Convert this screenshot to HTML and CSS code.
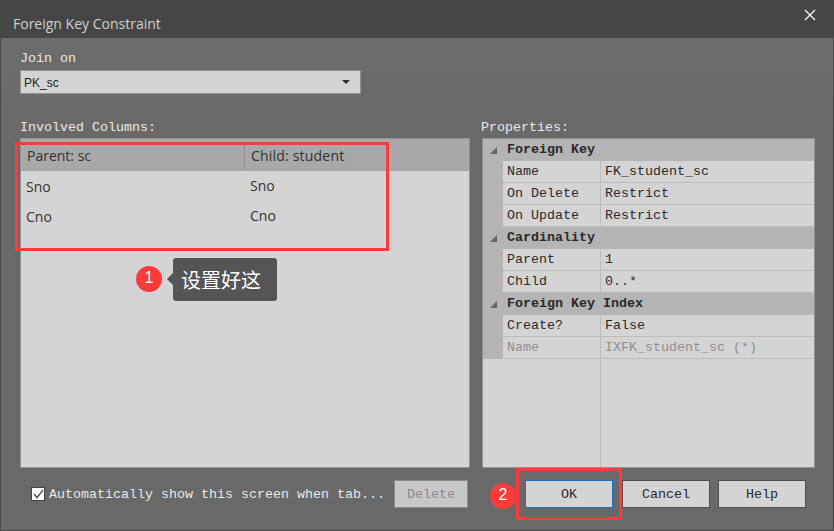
FILE: index.html
```html
<!DOCTYPE html>
<html>
<head>
<meta charset="utf-8">
<title>Foreign Key Constraint</title>
<link rel="stylesheet" href="styles.css">
</head>
<body>
<div class="dialog">
	<div class="titlebar">
		<span class="title">Foreign Key Constraint</span>
		<svg class="close" width="12" height="12" viewBox="0 0 12 12"><path d="M1 1L11 11M11 1L1 11" stroke="#fff" stroke-width="1.2" fill="none"/></svg>
	</div>
	<div class="content">
		<div class="label join-label">Join on</div>
		<div class="select">
			<span class="select-text">PK_sc</span>
			<span class="select-arrow"></span>
		</div>
		<div class="panels">
			<div class="panel-col">
				<div class="label">Involved Columns:</div>
				<div class="columns">
					<div class="col-head">
						<div class="head-cell first">Parent: sc</div>
						<div class="head-cell">Child: student</div>
					</div>
					<div class="col-row">
						<div class="cell first">Sno</div>
						<div class="cell second">Sno</div>
					</div>
					<div class="col-row">
						<div class="cell first">Cno</div>
						<div class="cell second">Cno</div>
					</div>
				</div>
			</div>
			<div class="panel-col">
				<div class="label props-label">Properties:</div>
				<div class="props">
					<div class="group"><span class="tri"></span>Foreign Key</div>
					<div class="prop"><div class="key">Name</div><div class="val">FK_student_sc</div></div>
					<div class="prop"><div class="key">On Delete</div><div class="val">Restrict</div></div>
					<div class="prop"><div class="key">On Update</div><div class="val">Restrict</div></div>
					<div class="group"><span class="tri"></span>Cardinality</div>
					<div class="prop"><div class="key">Parent</div><div class="val">1</div></div>
					<div class="prop"><div class="key">Child</div><div class="val">0..*</div></div>
					<div class="group"><span class="tri"></span>Foreign Key Index</div>
					<div class="prop"><div class="key">Create?</div><div class="val">False</div></div>
					<div class="prop disabled"><div class="key">Name</div><div class="val">IXFK_student_sc (*)</div></div>
					<div class="props-rest"><div class="rest-key"></div></div>
				</div>
			</div>
		</div>
		<div class="footer">
			<div class="check">
				<svg width="11" height="10" viewBox="0 0 11 10"><path d="M1 5L4 8.5L10 1" stroke="#555" stroke-width="1.5" fill="none"/></svg>
			</div>
			<div class="check-text">Automatically show this screen when tab...</div>
			<div class="btn off">Delete</div>
			<div class="btn ok">OK</div>
			<div class="btn">Cancel</div>
			<div class="btn">Help</div>
		</div>
	</div>

	<!-- annotations drawn over the screenshot -->
	<div class="mark mark-columns"></div>
	<div class="mark mark-ok"></div>
	<div class="badge badge-one">1</div>
	<div class="badge badge-two">2</div>
	<div class="tip">设置好这</div>
</div>
</body>
</html>
```

FILE: styles.css
```css
body {
	margin: 0;
	overflow: hidden;
}
.dialog {
	position: relative;
	width: 834px;
	height: 531px;
	display: flex;
	flex-direction: column;
	box-sizing: border-box;
	background-color: #696969;
	font-family: "Liberation Mono", monospace;
	font-size: 13.33px;
	color: #2a2a2a;
}
.titlebar {
	height: 38px;
	flex: none;
	display: flex;
	align-items: center;
	justify-content: space-between;
	padding: 0 13px 0 13px;
	background-color: #464646;
}
.title {
	font-family: "Open Sans", sans-serif;
	font-size: 14px;
	color: #cfcfcf;
	margin-top: 9px;
}
.close {
	margin-bottom: 9px;
	margin-right: 5px;
}
.content {
	flex: 1;
	display: flex;
	flex-direction: column;
	padding: 12px 0 0 19px;
	border-left: 1px solid #4a4a4a;
	border-right: 1px solid #4a4a4a;
	border-bottom: 1px solid #4a4a4a;
	background: linear-gradient(#6c6c6c, #696969 120px);
}
.label {
	height: 18px;
	line-height: 18px;
	color: #e8e8e8;
}
.join-label {
	margin-bottom: 2px;
}
.select {
	width: 341px;
	height: 24px;
	box-sizing: border-box;
	display: flex;
	align-items: center;
	justify-content: space-between;
	padding: 0 10px 0 3px;
	background-color: #d4d4d4;
	border: 1px solid #939393;
	font-family: "Liberation Sans", sans-serif;
	font-size: 12px;
	color: #222;
}
.select-text {
	padding-top: 2px;
}
.select-arrow {
	border-left: 4px solid transparent;
	border-right: 4px solid transparent;
	border-top: 4px solid #333;
}
.panels {
	display: grid;
	grid-template-columns: 450px 333px;
	column-gap: 12px;
	margin-top: 25px;
}
.panel-col {
	display: flex;
	flex-direction: column;
}
.panel-col .label {
	margin-bottom: 1px;
}
.panel-col .props-label {
	margin-left: -1px;
}
.columns {
	height: 330px;
	box-sizing: border-box;
	background-color: #d4d4d4;
	border: 1px solid #939393;
	font-family: "Open Sans", sans-serif;
	font-size: 14px;
	color: #333;
}
.col-head {
	height: 32px;
	display: flex;
	background-color: #a8a8a8;
}
.head-cell {
	line-height: 32px;
	padding-left: 6px;
}
.head-cell.first {
	width: 217px;
	height: 24px;
	margin-top: 6px;
	line-height: 22px;
	border-right: 1px solid #8e8e8e;
}
.head-cell:last-child {
	padding-left: 6px;
	margin-top: 1px;
	letter-spacing: 0.2px;
}
.col-row {
	height: 30px;
	display: flex;
}
.cell {
	line-height: 30px;
}
.cell.first {
	width: 224px;
	padding-left: 5px;
}
.cell.second {
	line-height: 28px;
}
.col-head + .col-row {
	margin-top: 1px;
}
.props {
	height: 330px;
	box-sizing: border-box;
	display: flex;
	flex-direction: column;
	background-color: #d4d4d4;
	border: 1px solid #939393;
}
.group {
	height: 22px;
	flex: none;
	box-sizing: border-box;
	padding-bottom: 2px;
	display: flex;
	align-items: center;
	background-color: #b4b4b4;
	font-weight: bold;
	color: #2a2a2a;
}
.tri {
	width: 7px;
	height: 7px;
	margin: 3px 10px 0 7px;
	background-color: #666;
	clip-path: polygon(100% 0, 100% 100%, 0 100%);
}
.prop {
	height: 22px;
	flex: none;
	box-sizing: border-box;
	display: flex;
	border-left: 20px solid #b4b4b4;
}
.key, .val {
	box-sizing: border-box;
	line-height: 21px;
	border-bottom: 1px solid #bcbcbc;
}
.key {
	width: 98px;
	padding-left: 4px;
	border-right: 1px solid #bcbcbc;
}
.val {
	flex: 1;
	padding-left: 4px;
}
.disabled {
	color: #8f8f8f;
}
.props-rest {
	flex: 1;
}
.rest-key {
	width: 118px;
	height: 100%;
	box-sizing: border-box;
	border-right: 1px solid #bcbcbc;
}
.footer {
	display: flex;
	align-items: center;
	height: 28px;
	margin-top: 12px;
}
.check {
	width: 14px;
	height: 14px;
	box-sizing: border-box;
	margin-left: 11px;
	display: flex;
	align-items: center;
	justify-content: center;
	background-color: #fff;
	border: 1px solid #444;
}
.check-text {
	width: 345px;
	margin-left: 4px;
	color: #e8e8e8;
}
.btn {
	width: 88px;
	height: 28px;
	box-sizing: border-box;
	text-align: center;
	line-height: 28px;
	margin-right: 8px;
	background-color: #d4d4d4;
	border: 1px solid #4f4f4f;
}
.btn.off {
	width: 74px;
	margin-right: 57px;
	background-color: #c8c8c8;
	border-color: #8c8c8c;
	color: #8a8a8a;
}
.btn.ok {
	border-color: #1672c8;
	margin-right: 9px;
}
.mark {
	position: absolute;
	box-sizing: border-box;
	border: 3px solid #ff3a3a;
}
.mark-columns {
	left: 15px;
	top: 142px;
	width: 374px;
	height: 109px;
}
.mark-ok {
	left: 516px;
	top: 468px;
	width: 106px;
	height: 52px;
}
.badge {
	position: absolute;
	width: 26px;
	height: 26px;
	border-radius: 50%;
	background-color: #ff3a3a;
	color: #fff;
	font-family: "Liberation Sans", sans-serif;
	font-size: 16px;
	line-height: 24px;
	text-align: center;
}
.badge-one {
	left: 136px;
	top: 266px;
}
.badge-two {
	left: 490px;
	top: 483px;
}
.tip {
	position: absolute;
	left: 173px;
	top: 258px;
	width: 104px;
	height: 43px;
	box-sizing: border-box;
	padding-left: 8px;
	border-radius: 3px;
	background-color: #555;
	color: #fff;
	font-family: "Noto Sans CJK SC", sans-serif;
	font-size: 20px;
	line-height: 43px;
}
.tip::before {
	content: "";
	position: absolute;
	left: -6px;
	top: 15px;
	border-top: 6px solid transparent;
	border-bottom: 6px solid transparent;
	border-right: 6px solid #555;
}
```
